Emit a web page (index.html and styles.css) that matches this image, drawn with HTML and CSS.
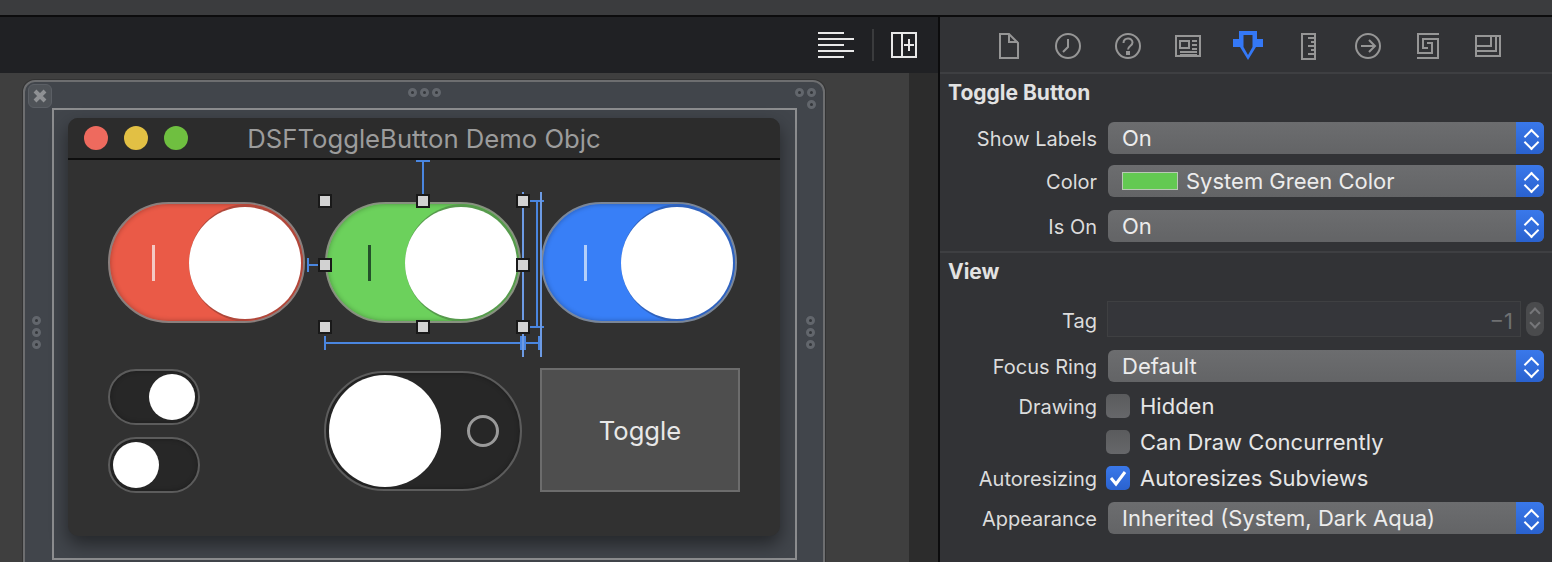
FILE: index.html
```html
<!DOCTYPE html>
<html lang="en">
<head>
  <meta charset="UTF-8" />
  <title>DSFToggleButton Demo Objc</title>
  <link rel="stylesheet" href="styles.css">
</head>
<body>
  <div class="top-strip"></div>
  <div class="workspace">
    <section class="editor">
      <div class="editor-bar">
        <svg class="bar-icon" width="36" height="28" viewBox="0 0 36 28">
          <path d="M0 2h26M0 8h36M0 14h26M0 20h36M0 26h26" stroke="#e8e8e8" stroke-width="2" fill="none"/>
        </svg>
        <span class="bar-sep"></span>
        <svg class="bar-icon" width="26" height="26" viewBox="0 0 26 26">
          <path d="M1 1h24v24H1zM11 1v24M13 13h10M18 7v12" stroke="#e8e8e8" stroke-width="2" fill="none"/>
        </svg>
      </div>
      <div class="canvas">
        <div class="gutter"></div>
        <div class="scene-frame">
          <span class="close-box">
            <svg width="22" height="22" viewBox="0 0 22 22"><path d="M6 6l10 10M16 6L6 16" stroke="#8f9194" stroke-width="4" fill="none"/></svg>
          </span>
          <span class="dots dots-top"><i></i><i></i><i></i></span>
          <span class="dots dots-corner"><i></i><i></i><i></i></span>
          <span class="dots dots-left"><i></i><i></i><i></i></span>
          <span class="dots dots-right"><i></i><i></i><i></i></span>
          <div class="view-frame"></div>
          <div class="window">
            <header class="titlebar">
              <span class="light red"></span>
              <span class="light yellow"></span>
              <span class="light green"></span>
              <span class="title">DSFToggleButton Demo Objc</span>
            </header>
            <div class="toggle big t-red on"><b class="tick"></b><span class="knob"></span></div>
            <div class="toggle big t-green on"><b class="tick"></b><span class="knob"></span></div>
            <div class="toggle big t-blue on"><b class="tick"></b><span class="knob"></span></div>
            <div class="toggle small s-on on"><span class="knob"></span></div>
            <div class="toggle small s-off"><span class="knob"></span></div>
            <div class="toggle big t-dark"><span class="knob"></span><u class="ring"></u></div>
            <div class="plain-toggle">Toggle</div>
          </div>
        </div>
        <svg class="guides" width="909" height="489" viewBox="0 73 909 489">
          <g stroke="#4a86e0" stroke-width="2" fill="none">
            <path d="M423 161v38M416 161h14"/>
            <path d="M308 258v14M308 265h12"/>
            <path d="M537 201v126M530 201h14M530 327h14"/>
            <path d="M325 336v14M325 343h196M521 336v14M525 336v14M525 343h14M539 336v14"/>
            <path d="M523 192v165M541 192v165" stroke="#6d9be4"/>
          </g>
          <g class="handles">
            <rect x="319" y="195" width="12" height="12"/>
            <rect x="417" y="195" width="12" height="12"/>
            <rect x="517" y="195" width="12" height="12"/>
            <rect x="319" y="259" width="12" height="12"/>
            <rect x="517" y="259" width="12" height="12"/>
            <rect x="319" y="321" width="12" height="12"/>
            <rect x="417" y="321" width="12" height="12"/>
            <rect x="517" y="321" width="12" height="12"/>
          </g>
        </svg>
      </div>
    </section>

    <aside class="inspector">
      <nav class="tabs">
        <svg width="60" height="32" viewBox="0 0 60 32"><path d="M22 3h9l9 9v15H22zM31 3v8h9"/></svg>
        <svg width="60" height="32" viewBox="0 0 60 32"><circle cx="30" cy="15" r="12"/><path d="M30 8v8l-5 5"/></svg>
        <svg width="60" height="32" viewBox="0 0 60 32"><circle cx="30" cy="15" r="12"/><path d="M25.5 12c0-6 9-6 9-.5 0 3.500-4.500 3.500-4.500 7"/><path d="M29 21h2v2h-2z"/></svg>
        <svg width="60" height="32" viewBox="0 0 60 32"><path d="M18 5h24v20H18zM22 10h9v7h-9zM34 10h5M34 14h5M34 18h5M22 21h17M22 24h17"/></svg>
        <svg width="60" height="32" viewBox="0 0 60 32"><path class="tab-active" fill-rule="evenodd" d="M21 0h18v8h6v8h-7l-8 13-8-13h-7V8h6zM25.500 4v12l4.500 8 4.500-8V4z"/></svg>
        <svg width="60" height="32" viewBox="0 0 60 32"><path d="M24 3h13v25H24zM30 7h7M33 11h4M30 15h7M33 19h4M30 23h7"/></svg>
        <svg width="60" height="32" viewBox="0 0 60 32"><circle cx="30" cy="15" r="12"/><path d="M23 15h14M31 9l6 6-6 6"/></svg>
        <svg width="60" height="32" viewBox="0 0 60 32"><path d="M41 3H20v19h14V12h-5M19 27h21V8H25v9h5"/></svg>
        <svg width="60" height="32" viewBox="0 0 60 32"><path d="M18 5h24v20H18zM18 15h15V5M18 20h20V5"/></svg>
      </nav>

      <section class="group group-first">
        <h2>Toggle Button</h2>
        <div class="row first-row"><label>Show Labels</label><div class="popup"><span>On</span><i class="arrows"></i></div></div>
        <div class="row color-row"><label>Color</label><div class="popup"><em class="swatch"></em><span>System Green Color</span><i class="arrows"></i></div></div>
        <div class="row on-row"><label>Is On</label><div class="popup"><span>On</span><i class="arrows"></i></div></div>
      </section>

      <section class="group">
        <h2>View</h2>
        <div class="row tag-row">
          <label>Tag</label>
          <div class="tag-field">&minus;1</div>
          <div class="stepper"><i></i><i></i></div>
        </div>
        <div class="row focus-row"><label>Focus Ring</label><div class="popup"><span>Default</span><i class="arrows"></i></div></div>
        <div class="row check-row"><label>Drawing</label><span class="check"></span><span class="check-text">Hidden</span></div>
        <div class="row check-row concurrent"><label></label><span class="check"></span><span class="check-text">Can Draw Concurrently</span></div>
        <div class="row check-row concurrent">
          <label>Autoresizing</label>
          <span class="check checked"><svg width="24" height="24" viewBox="0 0 24 24"><path d="M5 12l5 6 9-12" stroke="#fff" stroke-width="3" fill="none"/></svg></span>
          <span class="check-text">Autoresizes Subviews</span>
        </div>
        <div class="row appearance-row"><label>Appearance</label><div class="popup"><span>Inherited (System, Dark Aqua)</span><i class="arrows"></i></div></div>
      </section>
    </aside>
  </div>
</body>
</html>
```

FILE: styles.css
```css
* {
  box-sizing: border-box;
}

html, body {
  margin: 0;
  height: 562px;
  overflow: hidden;
}

body {
  font-family: Inter, "Noto Sans", sans-serif;
  background: #323336;
  color: #e6e6e6;
}

.top-strip {
  height: 17px;
  background: #3b3c3e;
  border-bottom: 2px solid #0c0c0d;
}

.workspace {
  display: flex;
  height: 545px;
}

/* editor side */
.editor {
  width: 938px;
  display: flex;
  flex-direction: column;
}

.editor-bar {
  height: 56px;
  flex: none;
  display: flex;
  align-items: center;
  justify-content: flex-end;
  padding-right: 21px;
  background: #202124;
}

.bar-sep {
  width: 2px;
  height: 32px;
  margin: 0 17px 0 18px;
  background: #3a3b3d;
}

.canvas {
  position: relative;
  flex: 1;
  overflow: hidden;
  background: #3f3f3f;
}

.gutter {
  position: absolute;
  left: 909px;
  top: 0;
  bottom: 0;
  right: 0;
  background: #2c2c2c;
}

.scene-frame {
  position: absolute;
  left: 23px;
  top: 7px;
  width: 802px;
  height: 520px;
  border: 2px solid #6d6e70;
  border-radius: 12px;
  background: #41454b;
  box-shadow: 0 0 0 1px #333;
}

.close-box {
  position: absolute;
  left: 3px;
  top: 2px;
  width: 24px;
  height: 24px;
  border: 1px solid #5b5f65;
  border-radius: 6px;
  background: #4f5358;
}

.close-box svg {
  display: block;
}

.dots {
  position: absolute;
  display: flex;
  gap: 3px;
}

.dots i {
  width: 9px;
  height: 9px;
  border-radius: 50%;
  background: #33363a;
  border: 3px solid #62666c;
}

.dots-top { left: 383px; top: 6px; }
.dots-corner { left: 770px; top: 6px; width: 21px; flex-wrap: wrap; justify-content: flex-end; }
.dots-left { left: 7px; top: 234px; flex-direction: column; }
.dots-right { left: 781px; top: 234px; flex-direction: column; }

.view-frame {
  position: absolute;
  left: 27px;
  top: 26px;
  width: 745px;
  height: 452px;
  border: 2px solid #8c8d8f;
}

.window {
  position: absolute;
  left: 43px;
  top: 36px;
  width: 712px;
  height: 418px;
  border-radius: 10px;
  background: #313131;
  box-shadow: 0 8px 18px rgba(0, 0, 0, 0.45);
}

.titlebar {
  height: 42px;
  display: flex;
  align-items: center;
  gap: 16px;
  padding-left: 16px;
  border-bottom: 2px solid #0e0e0e;
  border-radius: 10px 10px 0 0;
  background: #2c2c2c;
}

.light {
  width: 24px;
  height: 24px;
  border-radius: 50%;
}

.light.red { background: #ee6a5e; }
.light.yellow { background: #e2c044; }
.light.green { background: #6fbf40; }

.title {
  position: absolute;
  left: 0;
  right: 0;
  top: 6px;
  text-align: center;
  font-size: 25.7px;
  line-height: 30px;
  color: #9c9c9c;
}

.toggle {
  position: absolute;
  display: flex;
  align-items: center;
  padding: 0 3px;
  overflow: hidden;
  border-radius: 62px;
  border: 2px solid #808080;
  background: #272727;
  box-shadow: inset 0 0 5px rgba(0, 0, 0, 0.3);
}

.toggle.on {
  justify-content: flex-end;
}

.toggle.big {
  height: 121px;
  width: 196px;
}

.toggle.small {
  height: 56px;
  width: 92px;
  border-color: #5c5c5c;
}

.knob {
  flex: none;
  border-radius: 50%;
  background: #fff;
}

.big .knob {
  width: 112px;
  height: 112px;
}

.small .knob {
  width: 46px;
  height: 46px;
}

.t-red, .t-green, .t-blue {
  padding: 0 2px;
}

.toggle.t-red { left: 40px; top: 84px; width: 197px; background: #ea5a47; border-color: #8a7f7d; }
.t-green { left: 257px; top: 84px; background: #6cd15c; border-color: #87917f; }
.t-blue { left: 473px; top: 84px; background: #387ff7; border-color: #7a8698; }
.t-red .knob { box-shadow: 3px 0 0 3px #b0473a; }
.t-green .knob { box-shadow: 3px 0 0 3px #569a4c; }
.t-blue .knob { box-shadow: 3px 0 0 3px #2f62bd; }

.t-dark {
  left: 256px;
  top: 253px;
  border-color: #5c5c5c;
}

.toggle.t-dark {
  width: 198px;
  height: 120px;
}

.s-on { left: 40px; top: 251px; }
.s-off { left: 40px; top: 319px; }

.tick {
  position: absolute;
  left: 41px;
  top: 41px;
  width: 3px;
  height: 36px;
  background: #f4c9c3;
}

.t-red .tick {
  left: 42px;
}

.t-green .tick {
  background: #24512a;
}

.t-blue .tick {
  background: #b4cffa;
}

.ring {
  width: 32px;
  height: 32px;
  margin-left: 26px;
  border: 3px solid #9a9a9a;
  border-radius: 50%;
}

.plain-toggle {
  position: absolute;
  left: 472px;
  top: 250px;
  width: 200px;
  height: 124px;
  display: flex;
  align-items: center;
  justify-content: center;
  border: 2px solid #6c6c6c;
  background: #4e4e4e;
  font-size: 25.6px;
  color: #e8e8e8;
  padding-top: 1px;
}

.guides {
  position: absolute;
  left: 0;
  top: 0;
}

.handles rect {
  fill: #d2d2d2;
  stroke: #191919;
  stroke-width: 2;
}

/* inspector side */
.inspector {
  width: 614px;
  border-left: 2px solid #0c0c0d;
  background: #323336;
}

.tabs {
  height: 57px;
  padding: 14px 0 0 38px;
  display: flex;
  border-bottom: 2px solid #3e3f42;
}

.tabs svg {
  flex: none;
  overflow: visible;
  fill: none;
  stroke: #969696;
  stroke-width: 2;
}

.tabs .tab-active {
  fill: #3478f6;
  stroke: none;
}

.group {
  padding: 8px 8px 0 0;
}

.group-first {
  height: 179px;
  border-bottom: 2px solid #3e3f42;
}

h2 {
  margin: 0;
  padding-left: 8px;
  font-size: 21px;
  line-height: 22px;
  font-weight: 700;
  color: #e2e2e2;
}

.row {
  display: flex;
  align-items: center;
  height: 32px;
  font-size: 22px;
}

.row label {
  flex: none;
  width: 157px;
  margin-right: 11px;
  padding-top: 2px;
  text-align: right;
  font-size: 20px;
  color: #dcdcdc;
}

.first-row { margin-top: 18px; }
.color-row { margin-top: 11px; }
.on-row { margin-top: 13px; }
.tag-row { margin-top: 18px; height: 36px; }
.focus-row { margin-top: 13px; }
.check-row { margin-top: 8px; }
.concurrent { margin-top: 4px; }
.appearance-row { margin-top: 8px; }

.tag-row label {
  padding-top: 4px;
}

.popup {
  position: relative;
  flex: 1;
  height: 32px;
  padding: 0 40px 0 14px;
  display: flex;
  align-items: center;
  gap: 8px;
  border-radius: 6px;
  background: linear-gradient(#6c6d6f, #636466);
  color: #ececec;
}

.arrows {
  position: absolute;
  right: 0;
  top: 0;
  bottom: 0;
  width: 28px;
  border-radius: 0 6px 6px 0;
  background: linear-gradient(#3a78ea, #2a62cf);
}

.arrows::before,
.arrows::after {
  content: "";
  position: absolute;
  left: 10px;
  width: 9px;
  height: 9px;
  border-left: 2px solid #fff;
  border-top: 2px solid #fff;
  transform: rotate(45deg);
}

.arrows::before { top: 9px; }

.arrows::after {
  top: 15px;
  transform: rotate(225deg);
}

.swatch {
  width: 56px;
  height: 18px;
  border: 1px solid #b9c9b5;
  background: #63c952;
}

.tag-field {
  flex: 1;
  height: 36px;
  margin-left: -1px;
  padding-right: 7px;
  border: 1px solid #3f4042;
  background: #35363a;
  text-align: right;
  line-height: 38px;
  color: #6f7072;
}

.stepper {
  width: 18px;
  height: 34px;
  margin-left: 5px;
  padding: 7px 0 0 5px;
  border-radius: 8px;
  background: #4a4b4d;
}

.stepper i {
  display: block;
  width: 8px;
  height: 8px;
  border-left: 2px solid #76777a;
  border-top: 2px solid #76777a;
  transform: rotate(45deg);
}

.stepper i + i {
  margin-top: 2px;
  transform: rotate(225deg);
}

.check {
  flex: none;
  width: 24px;
  height: 24px;
  margin-left: -2px;
  border-radius: 5px;
  background: linear-gradient(#5a5b5d, #66676a);
}

.check svg {
  display: block;
}

.check.checked {
  background: linear-gradient(#3a78ea, #2a62cf);
}

.check-text {
  margin-left: 10px;
  color: #e6e6e6;
}
```
